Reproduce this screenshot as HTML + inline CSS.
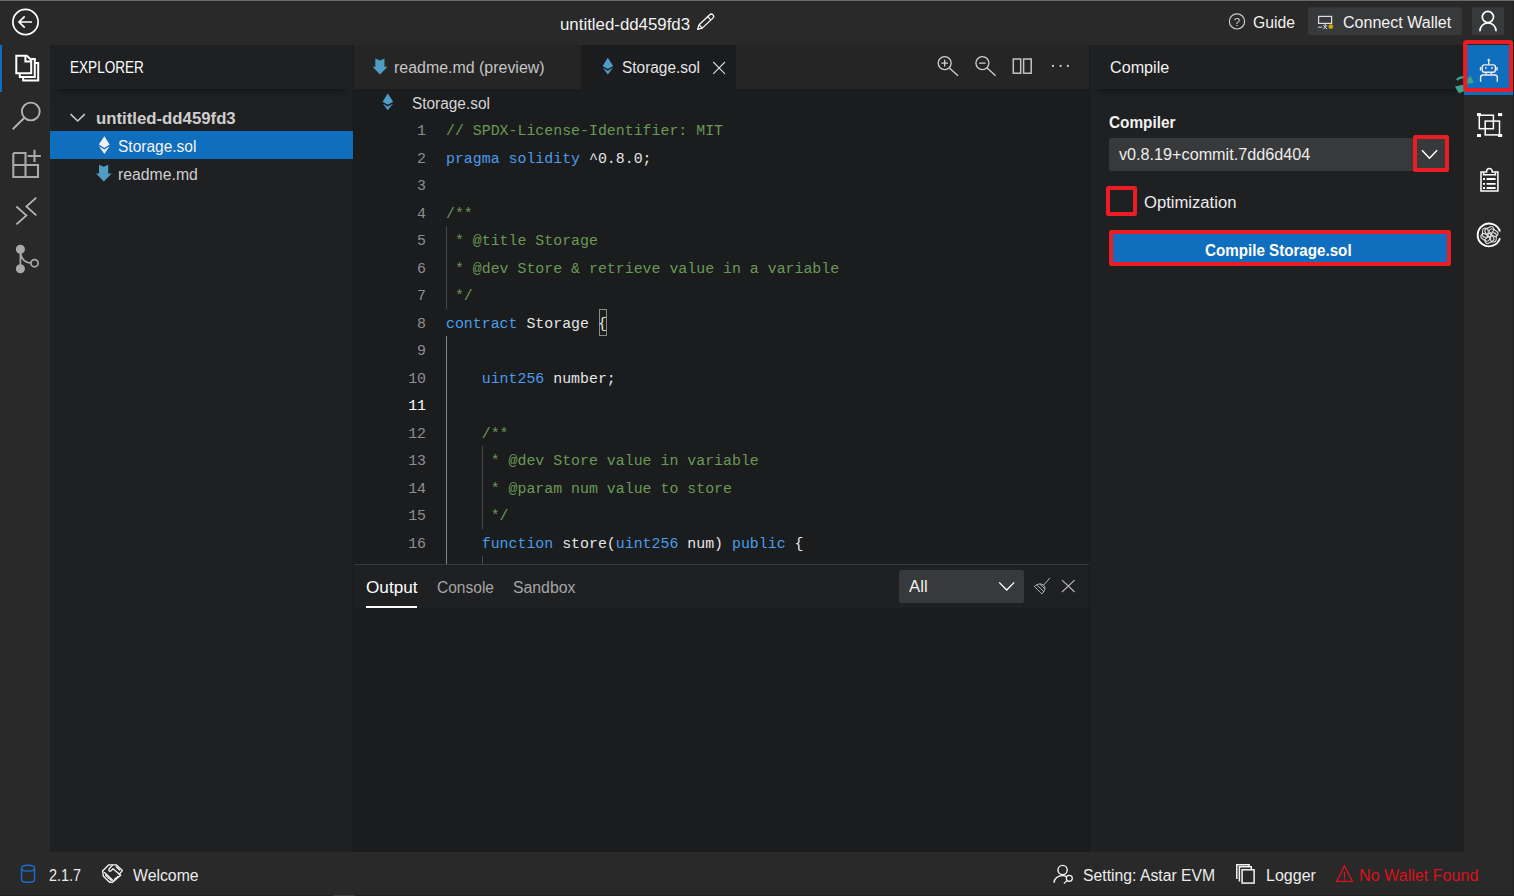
<!DOCTYPE html>
<html lang="en">
<head>
<meta charset="utf-8">
<title>untitled-dd459fd3</title>
<style>
*{box-sizing:border-box;margin:0;padding:0}
html,body{width:1514px;height:896px;overflow:hidden;background:#292929}
body{font-family:"Liberation Sans",sans-serif;color:#e8e8e8;position:relative;font-size:16px}
.abs{position:absolute}
.t{position:absolute;white-space:nowrap;line-height:20px;height:20px;transform-origin:0 50%}
svg{position:absolute;overflow:visible}
#topline{left:0;top:0;width:1514px;height:1px;background:#6a6a6a;box-shadow:0 1px 0 #252525}
#topbar{left:0;top:0;width:1514px;height:45px;background:#292929}
#leftbar{left:0;top:45px;width:50px;height:807px;background:#292929}
#rightbar{left:1464px;top:45px;width:50px;height:807px;background:#292929}
#status{left:0;top:852px;width:1514px;height:44px;background:#292929}
#explorer{left:50px;top:45px;width:303px;height:807px;background:#1f2022}
#exphead{left:50px;top:45px;width:303px;height:44px;background:#1f2022;box-shadow:0 8px 7px -7px rgba(0,0,0,.6);clip-path:inset(0 0 -14px 0)}
#editor{left:354px;top:45px;width:735px;height:520px;background:#1b1c1e}
#tabbar{left:354px;top:45px;width:735px;height:44px;background:#252526}
#tabactive{left:581px;top:45px;width:155px;height:45px;background:#1b1c1e}
#bottom{left:354px;top:565px;width:735px;height:287px;background:#1b1c1e}
#bottomhead{left:354px;top:565px;width:735px;height:43px;background:#1f2022}
#rightpanel{left:1090px;top:45px;width:374px;height:807px;background:#1f2022}
#rphead{left:1090px;top:45px;width:374px;height:44px;background:#1f2022;box-shadow:0 8px 7px -7px rgba(0,0,0,.6);clip-path:inset(0 0 -14px 0)}
.code{position:absolute;left:446px;white-space:pre;font-family:"Liberation Mono",monospace;font-size:14.9px;line-height:20px;height:20px;color:#e6e6e6}
.ln{position:absolute;left:380px;width:46px;text-align:right;font-family:"Liberation Mono",monospace;font-size:14.9px;line-height:20px;height:20px;color:#8e8e8e}
.c{color:#6a9955}.k{color:#4a9de8}
</style>
</head>
<body>
<div class="abs" id="topbar"></div>
<div class="abs" id="topline"></div>
<div class="abs" id="leftbar"></div>
<div class="abs" id="rightbar"></div>
<div class="abs" id="status"></div>
<div class="abs" id="explorer"></div>
<div class="abs" id="editor"></div>
<div class="abs" id="tabbar"></div>
<div class="abs" id="tabactive"></div>
<div class="abs" id="bottom"></div>
<div class="abs" id="bottomhead"></div>
<div class="abs" id="rightpanel"></div>
<div class="abs" id="rphead"></div>
<div class="abs" id="exphead"></div>
<div class="abs" style="left:353px;top:45px;width:1px;height:807px;background:#17181a"></div>
<div class="abs" style="left:1089px;top:45px;width:1px;height:807px;background:#17181a"></div>
<svg style="left:0;top:0" width="1514" height="45" viewBox="0 0 1514 45" fill="none">
<circle cx="25.5" cy="22" r="12.6" stroke="#fff" stroke-width="1.7"/>
<path d="M32 22H19.5M24.7 16.3L19 22l5.7 5.7" stroke="#fff" stroke-width="1.7"/>
<g transform="translate(697.3 29.6) rotate(-43.2)" stroke="#fff" stroke-width="1.25" stroke-linejoin="round">
<path d="M0.3 0L4.6 -2.3H19.2a2.3 2.3 0 0 1 0 4.6H4.6Z"/><path d="M4.6 -2.3V2.3M16.4 -2.3V2.3"/>
</g>
<circle cx="1237" cy="21.4" r="7.6" stroke="#c9c9c9" stroke-width="1.2"/>
<text x="1237" y="25.6" text-anchor="middle" font-family="Liberation Sans, sans-serif" font-size="11.5" fill="#d0d0d0" stroke="none">?</text>
<rect x="1308" y="7.2" width="153.8" height="27.8" rx="2.5" fill="#38393a"/>
<rect x="1472" y="7.2" width="32" height="27.8" rx="2.5" fill="#38393a"/>
<rect x="1318.6" y="16.4" width="13" height="7" stroke="#dedede" stroke-width="1.2"/>
<path d="M1318 27.2h4.2" stroke="#c8c8c8" stroke-width="1.1"/>
<path d="M1323.3 25.2l3.8 4M1327.1 25.2l-3.8 4M1325.2 23.6v2.4" stroke="#dedede" stroke-width="1"/>
<circle cx="1330.8" cy="26.7" r="2.4" fill="#c9a500"/>
<circle cx="1487.9" cy="17" r="5.6" stroke="#fff" stroke-width="1.7"/>
<path d="M1479.9 31.2a8.1 8.4 0 0 1 16.2 0" stroke="#fff" stroke-width="1.7"/>
</svg>

<div class="abs" style="left:0;top:45px;width:2px;height:47px;background:#106ebe"></div>
<svg style="left:0;top:45px" width="50" height="807" viewBox="0 45 50 807" fill="none">
<g stroke="#fff" stroke-width="2" stroke-linejoin="miter">
<path d="M16.3 55.7H26.7L31.2 59.8V73.3H16.3Z"/><path d="M25.4 55.7V61.6H31.2"/>
<path d="M31.2 59H34.8V76.9H19.8V73.3"/><path d="M34.8 63H38.2V80.5H23.2V76.9"/>
</g>
<g stroke="#b4b4b4" stroke-width="1.9">
<circle cx="30.8" cy="111.5" r="8.9"/><path d="M24.4 117.8L12.7 129.2"/>
</g>
<g stroke="#a9a9a9" stroke-width="2.1">
<path d="M13.3 153H25.5V177M13.3 153V177H38V165H13.3"/><path d="M34.5 149.8V162.1M27.6 156H40.9"/>
</g>
<g stroke="#b4b4b4" stroke-width="1.8">
<path d="M36.3 197.6L26.4 206.5L36.3 215.4"/><path d="M16.4 206.5L26.4 215.4L16.4 224.4"/>
</g>
<g stroke="#a9a9a9" stroke-width="1.7">
<circle cx="20.4" cy="249.2" r="3.7" fill="#a9a9a9"/><circle cx="20.4" cy="268.8" r="3.7" fill="#a9a9a9"/>
<circle cx="34.5" cy="263.2" r="3.6"/><path d="M20.4 250V268M20.6 253.5C21.5 259.5 25.5 262.6 30.9 263.2"/>
</g>
</svg>

<div class="abs" style="left:50px;top:131px;width:303px;height:28px;background:#106ebe"></div>
<svg style="left:50px;top:89px" width="303" height="110" viewBox="50 89 303 110" fill="none">
<path d="M70.6 114.2L77.7 121L84.8 114.2" stroke="#c8c8c8" stroke-width="1.6"/>
<path d="M104.4 136.3L109.6 144.6L104.4 147.9L98.8 144.6Z" fill="#f4f0f0"/>
<path d="M98.9 146.2L104.4 149.6L109.6 146.2L104.4 153.9Z" fill="#f4f0f0"/>
<path d="M99 164.8L103.7 166.8L108.2 164.8V173.4H111.7L103.8 181.4L96 173.4H99Z" fill="#4f9cc4"/>
</svg>

<svg style="left:354px;top:45px" width="735" height="72" viewBox="354 45 735 72" fill="none">
<path d="M375.3 58.5L380 60.4L384.5 58.5V66.8H387.6L380 74.5L372.6 66.8H375.3Z" fill="#4f9cc4"/>
<path d="M607.8 57.7L613.2 66L607.8 69.1L602.6 66Z" fill="#4f9cc4"/>
<path d="M602.7 67.6L607.8 70.8L613.2 67.6L607.8 74.5Z" fill="#4f9cc4"/>
<path d="M387.7 93.6L393.2 101.7L387.7 104.8L382.6 101.7Z" fill="#4f9cc4"/>
<path d="M382.7 103.4L387.7 106.5L393.2 103.4L387.7 110.3Z" fill="#4f9cc4"/>
<path d="M713.2 62L725 73.9M725 62L713.2 73.9" stroke="#d8d8d8" stroke-width="1.1"/>
<g stroke="#d0d0d0" stroke-width="1.3">
<circle cx="944.7" cy="63.1" r="6.5"/><path d="M949.4 67.9L958 75.7M941.4 63.1H948M944.7 59.8V66.4"/>
<circle cx="982.4" cy="63.1" r="6.5"/><path d="M987.1 67.9L995.6 75.7M979.1 63.1H985.7"/>
</g>
<g stroke="#c4c4c4" stroke-width="1.5">
<rect x="1013.3" y="59" width="7.4" height="14.2"/><rect x="1023.6" y="59" width="7.6" height="14.2"/>
</g>
<g fill="#cfcfcf"><rect x="1051.9" y="64.9" width="2" height="2"/><rect x="1059.6" y="64.9" width="2" height="2"/><rect x="1066.9" y="64.9" width="2" height="2"/></g>
</svg>

<div class="abs" style="left:446px;top:226px;width:1px;height:83px;background:#484848"></div>
<div class="abs" style="left:446px;top:336px;width:1px;height:228px;background:#848484"></div>
<div class="abs" style="left:482px;top:446px;width:1px;height:83px;background:#484848"></div>
<div class="abs" style="left:482px;top:556px;width:1px;height:8px;background:#484848"></div>
<div class="abs" style="left:599px;top:309px;width:8.3px;height:27px;border:1px solid #8a8a8a;background:#1a211c"></div>
<div class="ln" style="top:121.25px">1</div>
<div class="code" style="top:121.25px"><span class="c">// SPDX-License-Identifier: MIT</span></div>
<div class="ln" style="top:148.75px">2</div>
<div class="code" style="top:148.75px"><span class="k">pragma solidity</span> ^0.8.0;</div>
<div class="ln" style="top:176.25px">3</div>
<div class="ln" style="top:203.75px">4</div>
<div class="code" style="top:203.75px"><span class="c">/**</span></div>
<div class="ln" style="top:231.25px">5</div>
<div class="code" style="top:231.25px"><span class="c"> * @title Storage</span></div>
<div class="ln" style="top:258.75px">6</div>
<div class="code" style="top:258.75px"><span class="c"> * @dev Store &amp; retrieve value in a variable</span></div>
<div class="ln" style="top:286.25px">7</div>
<div class="code" style="top:286.25px"><span class="c"> */</span></div>
<div class="ln" style="top:313.75px">8</div>
<div class="code" style="top:313.75px"><span class="k">contract</span> Storage {</div>
<div class="ln" style="top:341.25px">9</div>
<div class="ln" style="top:368.75px">10</div>
<div class="code" style="top:368.75px">    <span class="k">uint256</span> number;</div>
<div class="ln" style="top:396.25px;color:#fff">11</div>
<div class="ln" style="top:423.75px">12</div>
<div class="code" style="top:423.75px">    <span class="c">/**</span></div>
<div class="ln" style="top:451.25px">13</div>
<div class="code" style="top:451.25px">    <span class="c"> * @dev Store value in variable</span></div>
<div class="ln" style="top:478.75px">14</div>
<div class="code" style="top:478.75px">    <span class="c"> * @param num value to store</span></div>
<div class="ln" style="top:506.25px">15</div>
<div class="code" style="top:506.25px">    <span class="c"> */</span></div>
<div class="ln" style="top:533.75px">16</div>
<div class="code" style="top:533.75px">    <span class="k">function</span> store(<span class="k">uint256</span> num) <span class="k">public</span> {</div>

<div class="abs" style="left:354px;top:564px;width:735px;height:1px;background:#3a3b3d"></div>
<div class="abs" style="left:366px;top:606px;width:51px;height:2px;background:#fff"></div>
<div class="abs" style="left:899px;top:570px;width:125px;height:33px;background:#38393a;border-radius:2.5px"></div>
<svg style="left:354px;top:565px" width="735" height="43" viewBox="354 565 735 43" fill="none">
<path d="M999.2 582.4L1006.7 590L1014.2 582.4" stroke="#fff" stroke-width="1.35"/>
<g stroke="#bdbdbd" stroke-width="0.95"><path d="M1049.9 578L1043.4 585.3"/><path d="M1034.3 586.4L1041.8 593.9"/><path d="M1034.3 586.4C1037.5 583.5 1041.8 583.3 1043.8 585.4C1045.8 587.6 1045.2 591 1041.8 593.9"/><path d="M1036.8 585L1043.9 591.6M1039.6 583.9L1045 589"/></g>
<path d="M1062 580.2L1074.6 592M1074.6 580.2L1062 592" stroke="#bcbcbc" stroke-width="1.05"/>
</svg>

<div class="abs" style="left:1109px;top:138px;width:340px;height:33px;background:#38393a;border-radius:2.5px"></div>
<div class="abs" style="left:1413.1px;top:134.8px;width:36.2px;height:37.5px;border:4.1px solid #ec1c24;border-radius:2.5px"></div>
<div class="abs" style="left:1106.1px;top:186.2px;width:31.3px;height:30.2px;border:4px solid #ec1c24;border-radius:2.5px"></div>
<div class="abs" style="left:1109px;top:230.1px;width:342px;height:36.2px;border:4.1px solid #ec1c24;border-radius:2.5px;background:#106ebe"></div>
<svg style="left:1090px;top:89px" width="374" height="200" viewBox="1090 89 374 200" fill="none">
<path d="M1422 150.3L1429.5 158.2L1437.1 150.3" stroke="#fff" stroke-width="1.5"/>
</svg>

<div class="abs" style="left:1464px;top:45px;width:50px;height:50px;background:#106ebe"></div>
<div class="abs" style="left:1513px;top:40px;width:1px;height:52px;background:#262626"></div>
<svg style="left:1440px;top:36px" width="74" height="230" viewBox="1440 36 74 230" fill="none">
<g fill="#38a58d"><path d="M1470.4 75.8L1474 82.4L1467.2 84V79Z"/><path d="M1455 86.6L1464 84.6V91.2L1458.9 93.2Z"/></g>
<path d="M1456.9 80C1458.5 77.8 1461 77 1464 77.4" stroke="#38a58d" stroke-width="2.2"/>
<rect x="1465.2" y="42" width="46" height="48" rx="1.5" stroke="#ec1c24" stroke-width="4.2"/>
<g stroke="#f6ecec" stroke-width="1.4">
<circle cx="1488.7" cy="60" r="1.2" fill="#f6ecec" stroke="none"/><path d="M1488.7 60V64.5"/>
<rect x="1482.2" y="64.9" width="13.2" height="7.4" rx="2.3"/>
<path d="M1480.5 67V70.4M1497 67V70.4"/>
<path d="M1486 72.5V74.6M1491.4 72.5V74.6"/>
<path d="M1480.6 81.8V77.4a2.4 2.4 0 0 1 2.4 -2.4H1494.9a2.4 2.4 0 0 1 2.4 2.4V81.8"/>
</g>
<g fill="#f6ecec"><rect x="1485" y="67.2" width="1.6" height="1.6"/><rect x="1491.1" y="67.2" width="1.6" height="1.6"/></g>
<g stroke="#fff" stroke-width="1.5"><rect x="1479.3" y="115.2" width="14.1" height="13.5"/><rect x="1485.2" y="121.1" width="14.3" height="13.8"/></g>
<g fill="#fff"><rect x="1477" y="113.1" width="4" height="3"/><rect x="1498" y="113.1" width="4.2" height="3"/><rect x="1477" y="134" width="4" height="3"/><rect x="1498" y="134" width="4.2" height="3"/></g>
<g stroke="#fff" stroke-width="1.5">
<path d="M1486.6 172V171.2a2.8 2.8 0 0 1 5.6 0V172H1497.9V191H1481V172Z"/>
<path d="M1483.6 172.6V174.8H1495.4V172.6"/>
<path d="M1486.6 179H1495.6M1486.6 183.9H1495.6M1486.6 188H1495.6" stroke-width="1.9"/>
<path d="M1483 179H1485M1483 183.9H1485M1483 188H1485" stroke-width="1.9"/>
</g>
<g stroke="#fff">
<path d="M1499.95 231.5A11.4 11.4 0 1 0 1499.95 238.3" stroke-width="1.9"/>
<g stroke-width="1" stroke="#e4e4e4"><rect x="1484.70" y="227.50" width="9.4" height="5.6" rx="2.8" transform="rotate(0 1489.4 235.0) rotate(-28 1489.4 230.30)"/><rect x="1484.70" y="227.50" width="9.4" height="5.6" rx="2.8" transform="rotate(60 1489.4 235.0) rotate(-28 1489.4 230.30)"/><rect x="1484.70" y="227.50" width="9.4" height="5.6" rx="2.8" transform="rotate(120 1489.4 235.0) rotate(-28 1489.4 230.30)"/><rect x="1484.70" y="227.50" width="9.4" height="5.6" rx="2.8" transform="rotate(180 1489.4 235.0) rotate(-28 1489.4 230.30)"/><rect x="1484.70" y="227.50" width="9.4" height="5.6" rx="2.8" transform="rotate(240 1489.4 235.0) rotate(-28 1489.4 230.30)"/><rect x="1484.70" y="227.50" width="9.4" height="5.6" rx="2.8" transform="rotate(300 1489.4 235.0) rotate(-28 1489.4 230.30)"/></g></g>
</svg>

<svg style="left:0;top:852px" width="1514" height="44" viewBox="0 852 1514 44" fill="none">
<g stroke="#1b6fd2" stroke-width="1.4"><ellipse cx="28.05" cy="868.2" rx="6.5" ry="2.9"/><path d="M21.55 868.2V879.4C21.55 883.2 34.55 883.2 34.55 879.4V868.2"/></g>
<g stroke="#f2f2f2" stroke-width="1.35" stroke-linejoin="round" stroke-linecap="round">
<path d="M102.6 871L108.8 864.8H116.2L122.4 870.6L119.2 874.2"/>
<path d="M102.6 871L103.4 876.2L109.6 882.2H112.6L120.6 875.2"/>
<path d="M112.4 865.4L109.2 868.8C108.2 870.4 109.4 871.8 110.8 871L113 868.8L120.6 875.2"/>
<path d="M116.2 866.8L119.6 870"/>
<path d="M104.4 872.6L113 880.6"/>
<path d="M105.6 875.2L106.8 876.4M107.8 877.2L109 878.4M110 879.2L111.2 880.4M114.6 879.2L115.6 878.2M116.8 877.4L117.8 876.4"/>
</g>
<g stroke="#f4f4f4" stroke-width="1.4">
<circle cx="1062.6" cy="870" r="4.6"/><path d="M1054.1 882.8C1054.1 878.4 1058 875.6 1062.4 875.6C1064 875.6 1065.4 875.9 1066.6 876.5"/>
<circle cx="1069.3" cy="878.3" r="3" stroke-width="1.3"/><path d="M1067.2 880.4L1063.8 883.6" stroke-width="1.3"/>
</g>
<g stroke="#f4f4f4" stroke-width="1.5">
<rect x="1242.1" y="869.8" width="12" height="13.3"/>
<path d="M1239.4 881.5V866.8H1251.3V869.8"/><path d="M1236.8 879V864.8H1249.1V866.8"/>
</g>
<g stroke="#e0121e" stroke-width="1.3"><path d="M1344.5 866L1352.4 881.3H1336.6Z" stroke-linejoin="miter"/><path d="M1344.5 871.8V878M1344.5 879V880.2"/></g>
</svg>
<div class="abs" style="left:0;top:895px;width:1514px;height:1px;background:#202123"></div>
<div class="abs" style="left:333px;top:895px;width:22px;height:1px;background:#3c3c3c"></div>
<div class="abs" style="left:1513px;top:1px;width:1px;height:895px;background:#202123"></div>
<div class="t" style="left:559.9px;top:15.0px;color:#f2f2f2;transform:scaleX(1.0521)">untitled-dd459fd3</div>
<div class="t" style="left:1253.1px;top:13.0px;color:#f2f2f2;transform:scaleX(0.9835)">Guide</div>
<div class="t" style="left:1343.3px;top:13.0px;color:#f2f2f2;transform:scaleX(1.0027)">Connect Wallet</div>
<div class="t" style="left:70.2px;top:58.0px;color:#ffffff;transform:scaleX(0.8481)">EXPLORER</div>
<div class="t" style="left:95.6px;top:109.0px;color:#cecece;font-weight:700;transform:scaleX(1.0477)">untitled-dd459fd3</div>
<div class="t" style="left:117.8px;top:137.0px;color:#f4f4f4;transform:scaleX(0.9686)">Storage.sol</div>
<div class="t" style="left:118.4px;top:165.0px;color:#cfcfcf;transform:scaleX(0.9861)">readme.md</div>
<div class="t" style="left:394.2px;top:58.0px;color:#c4c4c4;transform:scaleX(0.9963)">readme.md (preview)</div>
<div class="t" style="left:621.6px;top:58.0px;color:#e4e4e4;transform:scaleX(0.9637)">Storage.sol</div>
<div class="t" style="left:411.6px;top:94.0px;color:#d4d4d4;transform:scaleX(0.9625)">Storage.sol</div>
<div class="t" style="left:366.1px;top:578.0px;color:#ffffff;transform:scaleX(1.0722)">Output</div>
<div class="t" style="left:436.7px;top:578.0px;color:#a6a6a6;transform:scaleX(0.9710)">Console</div>
<div class="t" style="left:512.5px;top:578.0px;color:#a6a6a6;transform:scaleX(0.9878)">Sandbox</div>
<div class="t" style="left:908.8px;top:577.0px;color:#f0f0f0;transform:scaleX(1.0460)">All</div>
<div class="t" style="left:1110.3px;top:58.0px;color:#f2f2f2;transform:scaleX(1.0087)">Compile</div>
<div class="t" style="left:1109.2px;top:113.0px;color:#f2f2f2;font-weight:700;transform:scaleX(0.9590)">Compiler</div>
<div class="t" style="left:1119.1px;top:145.0px;color:#ececec;transform:scaleX(1.0116)">v0.8.19+commit.7dd6d404</div>
<div class="t" style="left:1144.2px;top:193.0px;color:#ececec;transform:scaleX(1.0391)">Optimization</div>
<div class="t" style="left:1204.9px;top:241.0px;color:#ffffff;font-weight:700;transform:scaleX(0.9476)">Compile Storage.sol</div>
<div class="t" style="left:49.4px;top:866.0px;color:#ececec;transform:scaleX(0.8990)">2.1.7</div>
<div class="t" style="left:132.6px;top:866.0px;color:#ececec;transform:scaleX(0.9881)">Welcome</div>
<div class="t" style="left:1082.5px;top:866.0px;color:#ececec;transform:scaleX(0.9838)">Setting: Astar EVM</div>
<div class="t" style="left:1265.8px;top:866.0px;color:#ececec;transform:scaleX(1.0014)">Logger</div>
<div class="t" style="left:1359.2px;top:866.0px;color:#d8111d;transform:scaleX(1.0078)">No Wallet Found</div>

</body>
</html>
